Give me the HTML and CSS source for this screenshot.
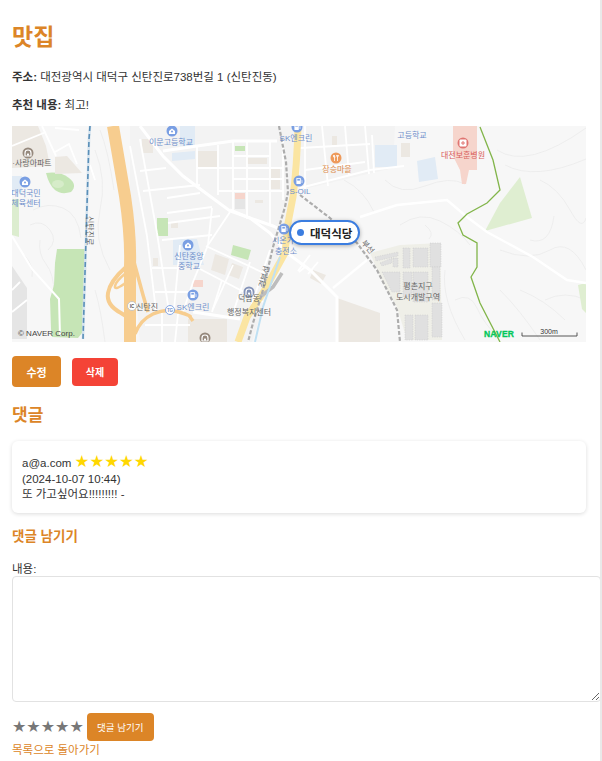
FILE: index.html
```html
<!DOCTYPE html>
<html lang="ko">
  <head>
    <meta charset="UTF-8" />
    <title>맛집</title>
    <link rel="stylesheet" href="styles.css">
  </head>
  <body>
    <main class="page">
      <h1 class="title">맛집</h1>
      <p class="info"><strong>주소:</strong> 대전광역시 대덕구 신탄진로738번길 1 (신탄진동)</p>
      <p class="info"><strong>추천 내용:</strong> 최고!</p>

      <div class="map">
        <svg class="map-art" viewBox="12 126 574 216" width="574" height="216">
          <defs>
            <g id="i-school">
              <path d="M-3 3v-3l3-2.6 3 2.6v3z" fill="#fff" />
              <circle cy="0.6" r="1" fill="#7a9fe3" />
            </g>
            <g id="i-gas">
              <rect x="-2.6" y="-3" width="4.4" height="6" rx="0.6" fill="#fff" />
              <rect x="-1.7" y="-2.2" width="2.6" height="1.8" fill="#7a9fe3" />
              <path d="M2 -1.4l1 1v2.4" fill="none" stroke="#fff" stroke-width="0.7" />
            </g>
            <g id="i-apt">
              <path d="M-3 3v-3q0-3 3-3t3 3v3z" fill="none" stroke="#fff" stroke-width="1.2" />
              <rect x="-1" y="0.6" width="2" height="2" fill="#fff" />
            </g>
          </defs>

          <rect x="12" y="126" width="574" height="216" fill="#f7f7f7" />

          <!-- built-up blocks behind the streets -->
          <path d="M130 126h170l-8 85-40 131H140l-10-120z" fill="#f3f3f3" />
          <path d="M300 126h95l-2 42-93 22z" fill="#f3f3f3" />

          <!-- contour lines -->
          <g fill="none" stroke="#ebebeb" stroke-width="0.8">
            <path d="M33 210q15-8 30-2t18 30" />
            <path d="M30 225q12-6 20 5t-2 20" />
            <path d="M40 240q-2 14 6 24t8 30" />
            <path d="M24 255q10 10 8 22" />
            <path d="M95 150q12 30 5 60t10 60" />
            <path d="M100 130q8 20 14 60" />
            <path d="M95 290q6 20 10 52" />
            <path d="M344 180q20 10 30 32" />
            <path d="M385 180q15 16 40 6t40-2" />
            <path d="M400 225q20-14 40-4t30 24" />
            <path d="M425 225q10 8 4 14" />
            <path d="M445 270q-4 30 20 70" />
            <path d="M455 300q15-8 22 8t22 30" />
            <path d="M500 250q30 12 50 0t36 20" />
            <path d="M497 150q30 20 89-22" />
            <path d="M505 165q30 16 81-6" />
            <path d="M540 180q18 8 30 30t16 8" />
            <path d="M530 240q20 6 24-24" />
            <path d="M500 290q20 20 40 50" />
            <path d="M520 290q25 10 45 30" />
            <path d="M545 300q20-10 41 0" />
          </g>

          <!-- parks -->
          <g fill="#c6e5b6">
            <path d="M57 249h28l-3 84-4 5-26-1-1-8-1-30 4-14 1-22z" />
            <path d="M46 173q14-2 23 5t2 14q-10 3-16-2t-9-17z" />
            <rect x="157" y="218" width="11" height="18" />
            <path d="M233 245l18 5-3 10-17-5z" />
            <rect x="235" y="146" width="10" height="5" />
          </g>
          <ellipse cx="58" cy="184" rx="6" ry="4" fill="#d6ecc9" />
          <path d="M12 199h7v38l-7-2z" fill="#dcedcf" />
          <path d="M520 177l12 41-47 13 15-28z" fill="#dfeed1" />
          <path d="M578 285l8-2v30l-4-4z" fill="#dfeed1" />

          <!-- school grounds and buildings -->
          <g fill="#e1ebf5">
            <path d="M173 239h24l7 26h-31z" />
            <path d="M172 153l23-2v8l-23 2z" />
            <rect x="180" y="126" width="15" height="20" />
            <rect x="375" y="145" width="22" height="22" />
            <path d="M417 161l18-4 3 22-19 3z" />
            <rect x="12" y="176" width="10" height="16" />
          </g>
          <g fill="#ece8e2">
            <path d="M12 126h26l8 20 4 20-38 2z" />
            <path d="M55 157l12-1 15 17-27 1z" />
            <rect x="198" y="151" width="19" height="17" />
            <rect x="142" y="139" width="11" height="14" />
            <rect x="247" y="158" width="20" height="6" />
            <rect x="270" y="169" width="10" height="20" />
            <path d="M215 254l14 5-4 16-14-5z" />
            <path d="M232 263l11 4-4 12-11-4z" />
            <rect x="188" y="319" width="39" height="23" />
            <path d="M337 298l43 15v29h-43z" />
            <rect x="401" y="143" width="9" height="14" />
            <rect x="332" y="136" width="5" height="9" />
            <path d="M313 270l13 5-5 9-11-6z" />
            <rect x="153" y="258" width="5" height="8" />
            <rect x="171" y="222" width="7" height="6" />
            <rect x="255" y="200" width="8" height="3" />
          </g>
          <g fill="#e5e5e5">
            <path d="M12 266l15 22v51H12z" />
            <rect x="235" y="199" width="10" height="10" />
          </g>
          <g fill="#f6d5cc">
            <rect x="193" y="280" width="10" height="7" />
            <rect x="235" y="193" width="10" height="6" />
            <path d="M453 126h24v44h-8l-3 14h-4l-2-14-7-14z" />
          </g>

          <!-- road grid -->
          <g fill="none" stroke="#fff" stroke-width="1.8">
            <path d="M130 146l17 90" />
            <path d="M140 139l17 94" />
            <path d="M147 236l9 75" />
            <path d="M157 233l12 79" />
            <path d="M197 146v42" />
            <path d="M218 145v50" />
            <path d="M233 141v70" />
            <path d="M247 141v78" />
            <path d="M270 141v85" />
            <path d="M283 140v60" />
            <path d="M197 168h86" />
            <path d="M233 179h50" />
            <path d="M218 191h65" />
            <path d="M233 156h37" />
            <path d="M140 171l26-3" />
            <path d="M143 191l57-6" />
            <path d="M167 198l33-5" />
            <path d="M167 213l45-6" />
            <path d="M168 223l52-7" />
            <path d="M162 240l50-5" />
            <path d="M152 268h30" />
            <path d="M155 292h40" />
            <path d="M180 245l-6 65" />
            <path d="M212 208l-4 37" />
            <path d="M230 212l-22 33" />
            <path d="M208 245l-15 37-10 30" />
            <path d="M233 265l-20 44" />
            <path d="M250 262l-18 54" />
            <path d="M270 250l-20 60" />
            <path d="M206 246l60 28" />
            <path d="M200 269l63 33" />
            <path d="M222 280l-10 32" />
            <path d="M145 325h45" />
            <path d="M162 312v30" />
            <path d="M178 314l-3 28" />
            <path d="M305 126v65" />
            <path d="M322 126l6 60" />
            <path d="M345 126l4 50" />
            <path d="M365 126l4 48" />
            <path d="M300 148l70-4" />
            <path d="M305 170l60-8" />
            <path d="M372 135l2 38" />
            <path d="M12 146l34-14" />
            <path d="M42 126l14 30" />
            <path d="M55 152l14-8 8 20" />
            <path d="M55 128l24 2" />
            <path d="M90 165l5 15" />
            <path d="M12 312l15-12" />
            <path d="M12 290l8-8" />
            <path d="M290 255l15 12-6 5" />
            <path d="M310 255l-12 16" />
            <path d="M318 262l-10 12" />
          </g>
          <g fill="none" stroke="#fff" stroke-width="3">
            <path d="M140 126l23 30 20 20 24 18 23 17 43 15 20 10" />
            <path d="M163 151l34-5 36-5h44" />
            <path d="M193 312l47 7" />
            <path d="M12 236l20 33 27 30 1 37" stroke-width="2" />
            <path d="M230 210l20 8 20 15 17 20 23 17 27 27v45" />
            <path d="M333 288l34-28" stroke-width="2.4" />
            <path d="M300 188l70-18 34-4" stroke-width="2" />
            <path d="M360 217l37-12 50-5 20 17 20 15 46 25 34 23 19 3" stroke-width="2.4" />
          </g>

          <!-- planned district -->
          <path d="M370 253l30-8 40-2 2 97h-35l-10-33-14-24z" fill="#efefe8" />
          <g fill="#e0e0e0" stroke="#c9c9c9" stroke-dasharray="1.2 1.2" stroke-width="0.5">
            <path d="M375 257l23-5v4l-22 5z" />
            <path d="M380 263l12-5v5l-10 3z" />
            <rect x="393" y="258" width="5" height="9" />
            <rect x="403" y="248" width="7" height="20" />
            <rect x="413" y="248" width="15" height="19" />
            <rect x="430" y="243" width="11" height="24" />
            <path d="M382 272h18v20h-8z" />
            <rect x="403" y="272" width="9" height="25" />
            <rect x="413" y="272" width="15" height="30" />
            <rect x="432" y="267" width="8" height="33" />
            <rect x="405" y="315" width="8" height="25" />
            <rect x="415" y="315" width="13" height="25" />
            <rect x="432" y="303" width="10" height="34" />
          </g>

          <!-- motorway, interchange -->
          <g fill="none" stroke="#f7cd8f">
            <path d="M113 126l12 70q6 40 5 70l0 76" stroke-width="12" />
            <path d="M126 267q-16 14-18 26t13 20l8 5" stroke-width="4" />
            <path d="M126 273q-10 8-11 13t9-2l4-3" stroke-width="2.5" />
            <path d="M134 262l9 33 5 17" stroke-width="3.5" />
            <path d="M135 334q5-14 18-20t26-2 11 5l3 4" stroke-width="3.5" />
          </g>

          <!-- trunk road -->
          <path d="M298 126q-1 40-5 71l-5 26-3 30-22 40-16 24-9 25" fill="none" stroke="#fbe5a2" stroke-width="7" />
          <path d="M282 273l-9 14-13 10" fill="none" stroke="#bdbdbd" stroke-width="3.5" />
          <path d="M280 257l-17 50-8 35" fill="none" stroke="#bfe0f3" stroke-width="2" />

          <!-- rail -->
          <g fill="none" stroke-width="2.2">
            <path d="M279 126l7 36 2 30-3 15-12 40-10 43-10 33-5 19" stroke="#adadad" stroke-dasharray="4 2" />
            <path d="M300 195l30 23 27 25 20 27 20 40 3 32" stroke="#adadad" stroke-dasharray="4 2" />
          </g>

          <!-- stream -->
          <path d="M90 126l-1 13-6 200" fill="none" stroke="#d5e3ee" stroke-width="2.6" />
          <path d="M90 126l-1 13-6 200" fill="none" stroke="#5a8fb8" stroke-width="1.6" stroke-dasharray="5 3" />

          <!-- hiking trail -->
          <path d="M480 127l13 33 7 30-13 13-20 11-9 9 5 12 14 8v24l-6 10 9 26 20 39" fill="none" stroke="#82b54a" stroke-width="1.3" />

          <!-- pois -->
          <g fill="#7a9fe3">
            <circle cx="172" cy="131" r="5.5" />
            <circle cx="25" cy="182" r="5.5" />
            <circle cx="188" cy="245" r="5.5" />
            <circle cx="193" cy="295" r="5.5" />
            <circle cx="297" cy="127" r="5.5" />
            <circle cx="299" cy="181" r="5.5" />
            <circle cx="284" cy="229" r="5.5" />
          </g>
          <use href="#i-school" x="172" y="131" />
          <use href="#i-school" x="25" y="182" />
          <use href="#i-school" x="188" y="245" />
          <use href="#i-gas" x="193" y="295" />
          <use href="#i-gas" x="297" y="127" />
          <use href="#i-gas" x="299" y="181" />
          <use href="#i-gas" x="284" y="229" />
          <circle cx="28" cy="153" r="5.5" fill="#96897d" />
          <circle cx="205" cy="338" r="5.5" fill="#96897d" />
          <circle cx="249" cy="292" r="5.5" fill="#8493b8" />
          <use href="#i-apt" x="28" y="153" />
          <use href="#i-apt" x="205" y="338" />
          <use href="#i-apt" x="249" y="292" />
          <circle cx="336" cy="158" r="5.5" fill="#ee9a5b" />
          <path d="M334.5 155v6M337.5 155v6M333.5 155v2h2M336.5 155q0 2 1 2t1-2" fill="none" stroke="#fff" stroke-width="0.8" />
          <circle cx="463" cy="143" r="5.5" fill="#e07571" />
          <rect x="459.5" y="139.5" width="7" height="7" rx="1" fill="#fff" />
          <path d="M463 141v4M461 143h4" stroke="#e07571" stroke-width="1" />
          <circle cx="132" cy="306" r="4.5" fill="#fff" stroke="#bbb" stroke-width="0.8" />
          <text class="poi-tiny" x="132" y="308" text-anchor="middle">IC</text>
          <circle cx="170" cy="310" r="4.5" fill="#fff" stroke="#7a9fe3" stroke-width="0.9" />
          <text class="poi-tiny poi-blue" x="170" y="312" text-anchor="middle">TG</text>

          <g class="poi-text poi-blue">
            <text x="171" y="145" text-anchor="middle">이문고등학교</text>
            <text x="26" y="196" text-anchor="middle">대덕국민</text>
            <text x="26" y="206" text-anchor="middle">체육센터</text>
            <text x="296" y="141" text-anchor="middle">SK엔크린</text>
            <text x="300" y="194" text-anchor="middle">S-OIL</text>
            <text x="412" y="138" text-anchor="middle">고등학교</text>
            <text x="189" y="259" text-anchor="middle">신탄중앙</text>
            <text x="189" y="269" text-anchor="middle">중학교</text>
            <text x="193" y="310" text-anchor="middle">SK엔크린</text>
            <text x="283" y="243" text-anchor="middle">시온가</text>
            <text x="286" y="254" text-anchor="middle">충전소</text>
          </g>
          <g class="poi-text poi-grey">
            <text x="32" y="166" text-anchor="middle">·사랑아파트</text>
            <text x="249" y="301" text-anchor="middle">덕암동</text>
            <text x="249" y="315" text-anchor="middle">행정복지센터</text>
            <text x="147" y="310" text-anchor="middle">신탄진</text>
            <text x="418" y="289" text-anchor="middle">평촌지구</text>
            <text x="418" y="300" text-anchor="middle">도시개발구역</text>
            <text transform="translate(87 216) rotate(90)">신탄진로</text>
            <text transform="translate(264 288) rotate(-75)">경부선</text>
            <text transform="translate(361 243) rotate(50)">부선</text>
          </g>
          <text class="poi-text poi-orange" x="337" y="172" text-anchor="middle">장승마을</text>
          <text class="poi-text poi-red" x="463" y="158" text-anchor="middle">대전보훈병원</text>

          <!-- map footer -->
          <text class="map-copy" x="18" y="336">© NAVER Corp.</text>
          <text class="map-brand" x="484" y="337">NAVER</text>
          <path d="M522 332.5v3.5h55v-3.5" fill="none" stroke="#444" stroke-width="0.9" />
          <text class="map-scale" x="549" y="334" text-anchor="middle">300m</text>
        </svg>
        <div class="marker"><span class="marker-dot"></span>대덕식당</div>
      </div>

      <div class="actions">
        <button class="btn btn-edit">수정</button>
        <button class="btn btn-delete">삭제</button>
      </div>

      <h2 class="section-title">댓글</h2>
      <div class="comment">
        <div>a@a.com <span class="stars">★★★★★</span></div>
        <div>(2024-10-07 10:44)</div>
        <div>또 가고싶어요!!!!!!!!! -</div>
      </div>

      <h3 class="form-title">댓글 남기기</h3>
      <form class="comment-form">
        <label class="field-label" for="content">내용:</label>
        <textarea class="field" id="content"></textarea>
        <div class="form-row">
          <span class="stars stars-off">★★★★★</span>
          <button class="btn btn-submit" type="button">댓글 남기기</button>
        </div>
      </form>
      <a class="back" href="#">목록으로 돌아가기</a>
    </main>
    <div class="scrollbar"></div>
  </body>
</html>
```

FILE: styles.css
```css
:root {
  --accent: #dc8527;
  --text: #333;
  --font: "Liberation Sans", "Noto Sans CJK KR", sans-serif;
}
html,
body {
  height: 100%;
}
body {
  margin: 0;
  overflow: hidden;
  background: #fff;
  color: var(--text);
  font-family: var(--font);
  font-size: 11.5px;
}
.page {
  width: 574px;
  padding: 24px 16px 0 12px;
}
.title {
  margin: 0 0 19px;
  color: var(--accent);
  font-size: 23px;
  line-height: 27px;
}
.info {
  margin: 0 0 14px;
  line-height: 14px;
}
.map {
  position: relative;
  width: 574px;
  height: 216px;
  margin-top: 14px;
}
.map-art {
  display: block;
}
.poi-text {
  font-size: 8px;
  font-family: var(--font);
}
.poi-tiny {
  font-size: 4.5px;
  font-weight: bold;
  fill: #555;
}
.poi-blue {
  fill: #6f8fcb;
}
.poi-grey {
  fill: #666;
}
.poi-orange {
  fill: #dd8d4e;
}
.poi-red {
  fill: #d9605c;
}
.map-copy {
  font-size: 8px;
  fill: #444;
}
.map-brand {
  font-size: 8.5px;
  font-weight: bold;
  letter-spacing: 0.2px;
  fill: #03c75a;
  stroke: #03c75a;
  stroke-width: 0.3px;
}
.map-scale {
  font-size: 7px;
  fill: #333;
}
.marker {
  position: absolute;
  left: 277px;
  top: 94px;
  display: flex;
  align-items: center;
  gap: 6px;
  height: 21px;
  padding: 0 6px 0 6px;
  background: #fff;
  border: 2px solid #3b7de0;
  border-radius: 13px;
  box-shadow: 0 1px 4px rgba(0, 0, 0, 0.3);
  color: #222;
  font-size: 11.5px;
  font-weight: bold;
}
.marker-dot {
  width: 7px;
  height: 7px;
  border-radius: 50%;
  background: #3b7de0;
}
.actions {
  display: flex;
  align-items: center;
  gap: 11px;
  margin-top: 14px;
}
.btn {
  border: none;
  border-radius: 4px;
  color: #fff;
  font-family: var(--font);
  font-size: 11px;
  cursor: pointer;
}
.btn-edit {
  width: 49px;
  height: 31px;
  background: var(--accent);
  font-weight: bold;
}
.btn-delete {
  width: 46px;
  height: 28px;
  background: #f44336;
  font-size: 10px;
  font-weight: bold;
}
.section-title {
  margin: 18px 0 14px;
  color: var(--accent);
  font-size: 17px;
  line-height: 22px;
}
.comment {
  padding: 14px 10px 10px;
  border-radius: 6px;
  box-shadow: 0 1px 4px rgba(0, 0, 0, 0.14);
  line-height: 15.5px;
}
.stars {
  color: #ffd700;
  font-family: "DejaVu Sans", sans-serif;
  font-size: 16.5px;
  line-height: 14px;
}
.form-title {
  margin: 15px 0 16px;
  color: var(--accent);
  font-size: 13.5px;
  line-height: 18px;
}
.field-label {
  display: block;
  line-height: 14px;
}
.field {
  display: block;
  width: 589px;
  height: 126px;
  padding: 0;
  box-sizing: border-box;
  border: 1px solid #e2e2e2;
  border-radius: 4px;
  background: #fff;
}
.form-row {
  display: flex;
  align-items: center;
  gap: 3px;
  margin-top: 11px;
}
.stars-off {
  color: #777;
  font-size: 16px;
}
.btn-submit {
  width: 67px;
  height: 28px;
  background: var(--accent);
  font-size: 9.5px;
}
.back {
  display: block;
  margin-top: 2px;
  color: var(--accent);
  font-size: 11.5px;
  line-height: 15px;
  text-decoration: none;
}
.scrollbar {
  position: absolute;
  top: 0;
  right: 0;
  bottom: 0;
  width: 2px;
  background: #e9e9e9;
}
```
